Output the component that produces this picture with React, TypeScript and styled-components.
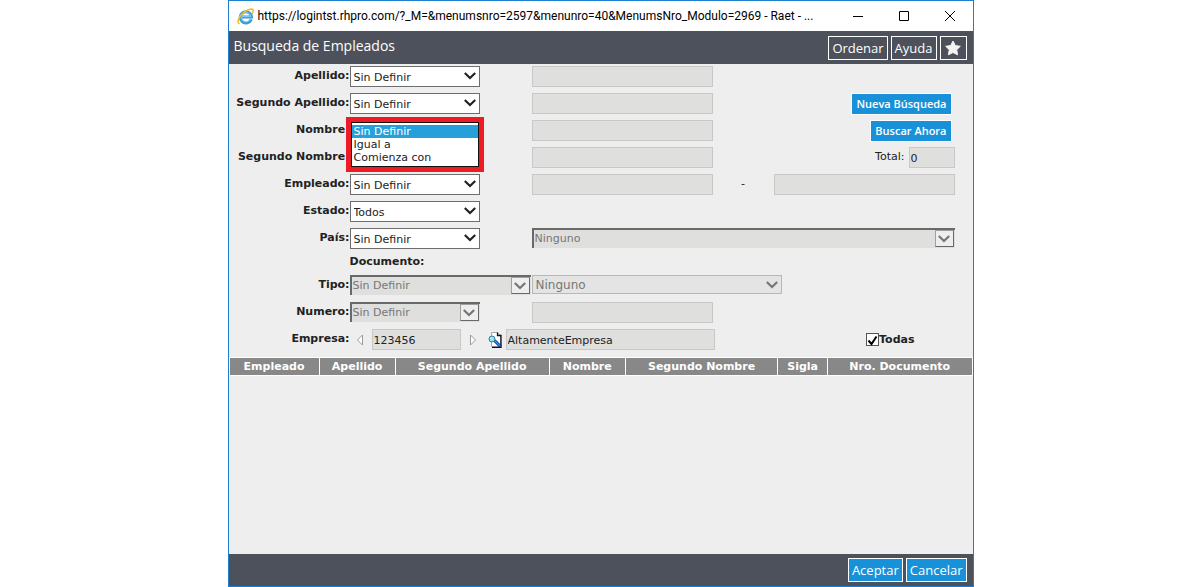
import React, { useId } from "react";
import styled, { createGlobalStyle, css } from "styled-components";

const SANS = `"DejaVu Sans", Verdana, sans-serif`;
const UI = `"Open Sans", "Noto Sans", sans-serif`;

const GlobalStyle = createGlobalStyle`
  *, *::before, *::after { box-sizing: border-box; }
  body { margin: 0; background: #fff; }
  button, input, select { font: inherit; color: inherit; margin: 0; border-radius: 0; }
`;

const Window = styled.main`
  display: flex;
  flex-direction: column;
  width: 100%;
  max-width: 746px;
  min-height: 100vh;
  margin: 0 auto;
  border: 1px solid #1c7fd0;
  background: #eee;
  color: #222;
  font: 11px/20px ${SANS};
`;

const TitleBar = styled.header`
  display: flex;
  align-items: center;
  gap: 4px;
  height: 30px;
  padding-left: 8px;
  background: #fff;
  color: #000;
  font: 12px/16px Roboto, sans-serif;
`;

const Address = styled.span`
  flex: 1;
  min-width: 0;
  overflow: hidden;
  white-space: nowrap;
`;

const Controls = styled.div`
  display: flex;
`;

const WindowButton = styled.button`
  display: grid;
  place-items: center;
  width: 46px;
  height: 30px;
  padding: 0;
  border: 0;
  background: none;
`;

const Bar = styled.div`
  display: flex;
  align-items: center;
  gap: 3px;
  height: 33px;
  padding: 0 6px 0 5px;
  background: #4d515b;
  color: #fff;
`;

const Footer = styled(Bar)`
  justify-content: flex-end;
  height: 32px;
`;

const Title = styled.h1`
  flex: 1;
  align-self: flex-start;
  margin: 0;
  font: 14px/30px ${UI};
`;

const BarButton = styled.button<{ $primary?: boolean }>`
  display: grid;
  place-items: center;
  height: 24px;
  padding: 0 3px;
  border: 1px solid #fff;
  background: ${(p) => (p.$primary ? "#1991d8" : "transparent")};
  color: #fff;
  font: 13px/18px ${UI};
`;

const Form = styled.form`
  flex: 1;
  padding-top: 2px;
`;

const Row = styled.div<{ $short?: boolean }>`
  display: grid;
  grid-template-columns: 121px 182px 1fr 61px 1fr;
  align-items: start;
  height: ${(p) => (p.$short ? 20 : 27)}px;
  padding-right: 18px;
`;

const Label = styled.label`
  font-weight: bold;
  text-align: right;
  white-space: nowrap;
`;

const Heading = styled.strong`
  grid-column: 2;
  line-height: 14px;
`;

const Field = styled.input`
  width: 100%;
  min-width: 0;
  height: 21px;
  padding: 1px 1px 0;
  border: 1px solid #c8c8c8;
  background: #dfdfde;
`;

const Cell = styled.div<{ $wide?: boolean }>`
  position: relative;
  grid-column: ${(p) => (p.$wide ? "3 / -1" : "auto")};
`;

type Look = "normal" | "inset" | "flat";

const SelectBox = styled.div<{ $width: string }>`
  position: relative;
  width: ${(p) => p.$width};
`;

const looks = {
  normal: css`
    height: 21px;
    padding: 1px 24px 0 3px;
    border: 1px solid #6d6d6d;
    background: #fff;
    color: #222;
  `,
  inset: css`
    height: 20px;
    padding: 0 24px 0 1px;
    border: 0 solid #696969;
    border-width: 2px 0 0 2px;
    background: #dfdfde;
    color: #767676;
    line-height: 14px;
  `,
  flat: css`
    height: 19px;
    padding: 0 24px 0 3px;
    border: 1px solid #b8b8b8;
    background: #e4e4e4;
    color: #767676;
    font-size: 12px;
    line-height: 14px;
  `,
};

const Select = styled.select<{ $look: Look }>`
  display: block;
  appearance: none;
  width: 100%;
  opacity: 1;
  ${(p) => looks[p.$look]}
`;

const Arrow = styled.span<{ $look: Look }>`
  position: absolute;
  display: grid;
  place-items: center;
  pointer-events: none;
  top: ${(p) => (p.$look === "inset" ? 2 : 1)}px;
  right: 1px;
  width: ${(p) => (p.$look === "inset" ? 19 : 18)}px;
  height: 17px;
  color: ${(p) => (p.$look === "normal" ? "#222" : "#767676")};
  ${(p) =>
    p.$look === "inset" &&
    css`
      border: 1px solid #696969;
      border-top-color: #a0a0a0;
      border-left-color: #a0a0a0;
      background: #eee;
    `}
`;

const Frame = styled.div`
  position: absolute;
  z-index: 1;
  top: -3px;
  left: -4px;
  width: 138px;
  border: 5px solid #ed1c24;
`;

const List = styled.ul`
  margin: 0;
  padding: 2px 0;
  list-style: none;
  border: 1px solid #111;
  background: #fff;
`;

const Option = styled.li<{ $on?: boolean }>`
  padding-left: 2px;
  line-height: 13px;
  background: ${(p) => (p.$on ? "#26a0da" : "transparent")};
  color: ${(p) => (p.$on ? "#fff" : "#222")};
`;

const Actions = styled.div`
  grid-column: 5;
  display: flex;
  justify-content: flex-end;
  padding-right: 3px;
`;

const ActionButton = styled.button`
  height: 22px;
  padding: 0 4px;
  border: 1px solid #fff;
  background: #1991d8;
  color: #fff;
  font: 600 11px/18px ${UI};
`;

const Total = styled.label`
  grid-column: 5;
  display: flex;
  justify-content: flex-end;
  gap: 4px;
`;

const TotalField = styled(Field)`
  width: 46px;
`;

const Dash = styled.span`
  text-align: center;
`;

const Company = styled.div`
  grid-column: 2 / -1;
  display: flex;
  align-items: center;
`;

const IconButton = styled.button<{ $width: number }>`
  display: grid;
  place-items: center;
  flex: none;
  width: ${(p) => p.$width}px;
  height: 21px;
  padding: 0;
  border: 0;
  background: none;
`;

const CodeField = styled(Field)`
  flex: none;
  width: 89px;
`;

const NameField = styled(Field)`
  flex: 0 1 209px;
`;

const Check = styled.label`
  position: relative;
  display: flex;
  align-items: center;
  margin: 0 40px 0 auto;
  font-weight: bold;
  svg { position: absolute; left: 1px; top: 5px; pointer-events: none; }
  input:not(:checked) + svg { display: none; }
`;

const CheckInput = styled.input`
  appearance: none;
  width: 13px;
  height: 13px;
  border: 1px solid #555;
  background: #fff;
`;

const Results = styled.table`
  width: 100%;
  margin-top: 1px;
  table-layout: fixed;
  border-spacing: 1px;
  background: #fff;
  color: #fff;
  th {
    height: 17px;
    padding: 0;
    background: #888;
    line-height: 16px;
    white-space: nowrap;
  }
`;

function Chevron() {
  return (
    <svg width="12" height="8" viewBox="0 0 12 8" fill="none" stroke="currentColor" strokeWidth="2.200">
      <path d="M.8 1L6 6l5.200-5" />
    </svg>
  );
}

function Dropdown({ id, value, look = "normal", width = "130px", label }: { id?: string; value: string; look?: Look; width?: string; label?: string }) {
  return (
    <SelectBox $width={width}>
      <Select id={id} $look={look} aria-label={label} disabled={look !== "normal"} defaultValue={value}>
        <option>{value}</option>
      </Select>
      <Arrow $look={look}><Chevron /></Arrow>
    </SelectBox>
  );
}

function Criterion({ label, value = "Sin Definir", look, width, overlay, children }: { label: string; value?: string; look?: Look; width?: string; overlay?: React.ReactNode; children?: React.ReactNode }) {
  const id = useId();
  return (
    <Row>
      <Label htmlFor={id}>{label}:</Label>
      <Cell>
        <Dropdown id={id} value={value} look={look} width={width} />
        {overlay}
      </Cell>
      {children}
    </Row>
  );
}

function OpenList() {
  return (
    <Frame>
      <List role="listbox" aria-label="Nombre">
        <Option role="option" aria-selected $on>Sin Definir</Option>
        <Option role="option" aria-selected={false}>Igual a</Option>
        <Option role="option" aria-selected={false}>Comienza con</Option>
      </List>
    </Frame>
  );
}

function BrowserIcon() {
  return (
    <svg width="17" height="17" viewBox="0 0 17 17" fill="none">
      <path d="M14.200 11.300A5.600 5.600 0 1 1 14.500 9H5" stroke="#3a9ad9" strokeWidth="3" />
      <path d="M13.500 10.800A4.900 4.900 0 1 1 13.800 8.600H5" stroke="#7fd0f5" strokeWidth="1" />
      <path d="M2.600 15.800C-.6 14.600 1.600 9 6 5.200 10 1.700 14.600.2 15.900 1.800c.6.900.1 2.400-.8 3.800" stroke="#f0bd2c" strokeWidth="1.600" />
    </svg>
  );
}

function WindowControls() {
  return (
    <Controls>
      <WindowButton type="button" aria-label="Minimizar">
        <svg width="10" height="11" viewBox="0 0 10 11" stroke="#000"><path d="M0 5.500h10" /></svg>
      </WindowButton>
      <WindowButton type="button" aria-label="Maximizar">
        <svg width="10" height="10" viewBox="0 0 10 10" stroke="#000" fill="none"><path d="M.5.5h9v9h-9z" /></svg>
      </WindowButton>
      <WindowButton type="button" aria-label="Cerrar">
        <svg width="10" height="10" viewBox="0 0 10 10" stroke="#000"><path d="M0 0l10 10M10 0L0 10" /></svg>
      </WindowButton>
    </Controls>
  );
}

function SearchPageIcon() {
  return (
    <svg width="15" height="16" viewBox="0 0 15 16">
      <path d="M3.500.5h6l3 3v11h-9z" fill="#fff" stroke="#aaa" />
      <path d="M9.500.5v3h3.500V15.300H4" fill="none" stroke="#111" strokeWidth="1.300" />
      <path d="M6.500 8.500l6 6" stroke="#10209a" strokeWidth="3" />
      <path d="M6.500 8.500l5.500 5.500" stroke="#20a8f0" strokeWidth="1.200" />
      <circle cx="4" cy="7" r="3" fill="#7fe8f0" stroke="#3a7a98" />
      <path d="M2.500 7L4 5.500" stroke="#fff" />
    </svg>
  );
}

const columns: [string, number][] = [
  ["Empleado", 12.1],
  ["Apellido", 10.2],
  ["Segundo Apellido", 20.8],
  ["Nombre", 10.2],
  ["Segundo Nombre", 20.6],
  ["Sigla", 6.6],
  ["Nro. Documento", 19.5],
];

export default function App() {
  const company = useId();
  return (
    <>
      <GlobalStyle />
      <Window>
        <TitleBar>
          <BrowserIcon />
          <Address>https://logintst.rhpro.com/?_M=&amp;menumsnro=2597&amp;menunro=40&amp;MenumsNro_Modulo=2969 - Raet - ...</Address>
          <WindowControls />
        </TitleBar>
        <Bar>
          <Title>Busqueda de Empleados</Title>
          <BarButton type="button">Ordenar</BarButton>
          <BarButton type="button">Ayuda</BarButton>
          <BarButton type="button" aria-label="Favorito">
            <svg width="19" height="16" viewBox="0 0 19 16">
              <path d="M9 1l2.300 4.600 5 .7-3.600 3.500.9 5L9 12.500l-4.600 2.300.9-5L1.700 6.300l5-.7z" fill="#f4f4f4" stroke="#f4f4f4" strokeLinejoin="round" />
            </svg>
          </BarButton>
        </Bar>
        <Form>
          <Criterion label="Apellido"><Field disabled aria-label="Apellido" /></Criterion>
          <Criterion label="Segundo Apellido">
            <Field disabled aria-label="Segundo Apellido" />
            <Actions><ActionButton type="button">Nueva Búsqueda</ActionButton></Actions>
          </Criterion>
          <Criterion label="Nombre" overlay={<OpenList />}>
            <Field disabled aria-label="Nombre" />
            <Actions><ActionButton type="button">Buscar Ahora</ActionButton></Actions>
          </Criterion>
          <Criterion label="Segundo Nombre">
            <Field disabled aria-label="Segundo Nombre" />
            <Total>Total: <TotalField readOnly defaultValue="0" /></Total>
          </Criterion>
          <Criterion label="Empleado">
            <Field disabled aria-label="Empleado desde" />
            <Dash>-</Dash>
            <Field disabled aria-label="Empleado hasta" />
          </Criterion>
          <Criterion label="Estado" value="Todos" />
          <Criterion label="País">
            <Cell $wide><Dropdown value="Ninguno" look="inset" width="100%" label="País" /></Cell>
          </Criterion>
          <Row $short><Heading>Documento:</Heading></Row>
          <Criterion label="Tipo" look="inset" width="181px">
            <Cell $wide><Dropdown value="Ninguno" look="flat" width="250px" label="Tipo de documento" /></Cell>
          </Criterion>
          <Criterion label="Numero" look="inset">
            <Field disabled aria-label="Numero" />
          </Criterion>
          <Row>
            <Label htmlFor={company}>Empresa:</Label>
            <Company>
              <IconButton type="button" $width={22} aria-label="Anterior">
                <svg width="8" height="12" viewBox="0 0 8 12"><path d="M5.500 1v10L.5 6z" fill="#fff" stroke="#999" /></svg>
              </IconButton>
              <CodeField id={company} readOnly defaultValue="123456" />
              <IconButton type="button" $width={24} aria-label="Siguiente">
                <svg width="6" height="12" viewBox="0 0 6 12"><path d="M.5 1v10l5-5z" fill="#fff" stroke="#999" /></svg>
              </IconButton>
              <IconButton type="button" $width={21} aria-label="Buscar empresa"><SearchPageIcon /></IconButton>
              <NameField readOnly aria-label="Nombre de la empresa" defaultValue="AltamenteEmpresa" />
              <Check>
                <CheckInput type="checkbox" defaultChecked />
                <svg width="11" height="11" viewBox="0 0 11 11"><path d="M1.500 5.500l3 3.500 5-7.500" fill="none" stroke="#000" strokeWidth="2" /></svg>
                Todas
              </Check>
            </Company>
          </Row>
          <Results>
            <colgroup>{columns.map(([name, w]) => <col key={name} width={`${w}%`} />)}</colgroup>
            <thead><tr>{columns.map(([name]) => <th key={name} scope="col">{name}</th>)}</tr></thead>
          </Results>
        </Form>
        <Footer as="footer">
          <BarButton type="button" $primary>Aceptar</BarButton>
          <BarButton type="button" $primary>Cancelar</BarButton>
        </Footer>
      </Window>
    </>
  );
}
